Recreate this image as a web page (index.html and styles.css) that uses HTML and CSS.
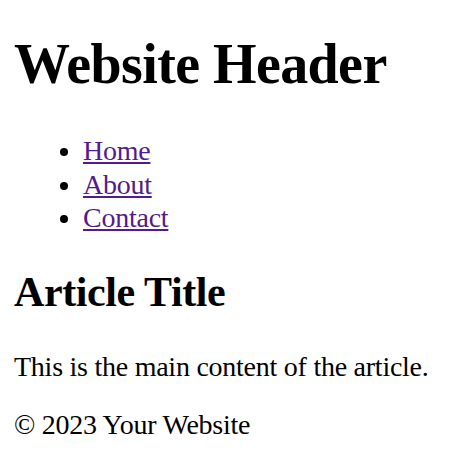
FILE: index.html
```html
<!DOCTYPE html>
<html>
<head>
<meta charset="utf-8">
<title>Website</title>
<link rel="stylesheet" href="styles.css">
</head>
<body>
<header class="site-header">
  <h1 class="site-title">Website Header</h1>
  <nav class="site-nav">
    <ul class="nav-list">
      <li class="nav-item"><a href="#" class="nav-link">Home</a></li>
      <li class="nav-item"><a href="#" class="nav-link">About</a></li>
      <li class="nav-item"><a href="#" class="nav-link">Contact</a></li>
    </ul>
  </nav>
</header>
<main class="content">
  <article class="article">
    <h2 class="article-title">Article Title</h2>
    <p class="article-body">This is the main content of the article.</p>
  </article>
</main>
<footer class="site-footer">
  <p class="footer-text">© 2023 Your Website</p>
</footer>
</body>
</html>
```
FILE: styles.css
```css
html, body {
  margin: 0;
  padding: 0;
}
body {
  display: flow-root;
  padding: 0 14px;
  font-family: "Liberation Serif", "Times New Roman", serif;
  font-size: 28px;
  line-height: 31px;
  letter-spacing: -0.25px;
  color: #000;
  background: #fff;
}
.site-title {
  font-size: 56px;
  line-height: 62px;
  letter-spacing: -0.6px;
  font-weight: bold;
  margin: 33px 0 0;
}
.nav-list {
  margin: 39px 0 0;
  padding-left: 69px;
}
.nav-item {
  line-height: 33.5px;
}
.nav-link {
  color: #551a8b;
  text-decoration: underline;
}
.article-title {
  font-size: 42px;
  line-height: 46.5px;
  letter-spacing: -0.4px;
  font-weight: bold;
  margin: 34.3px 0 0;
}
.article-body {
  margin: 36px 0 0;
}
.footer-text {
  margin: 27px 0 0;
}
```
